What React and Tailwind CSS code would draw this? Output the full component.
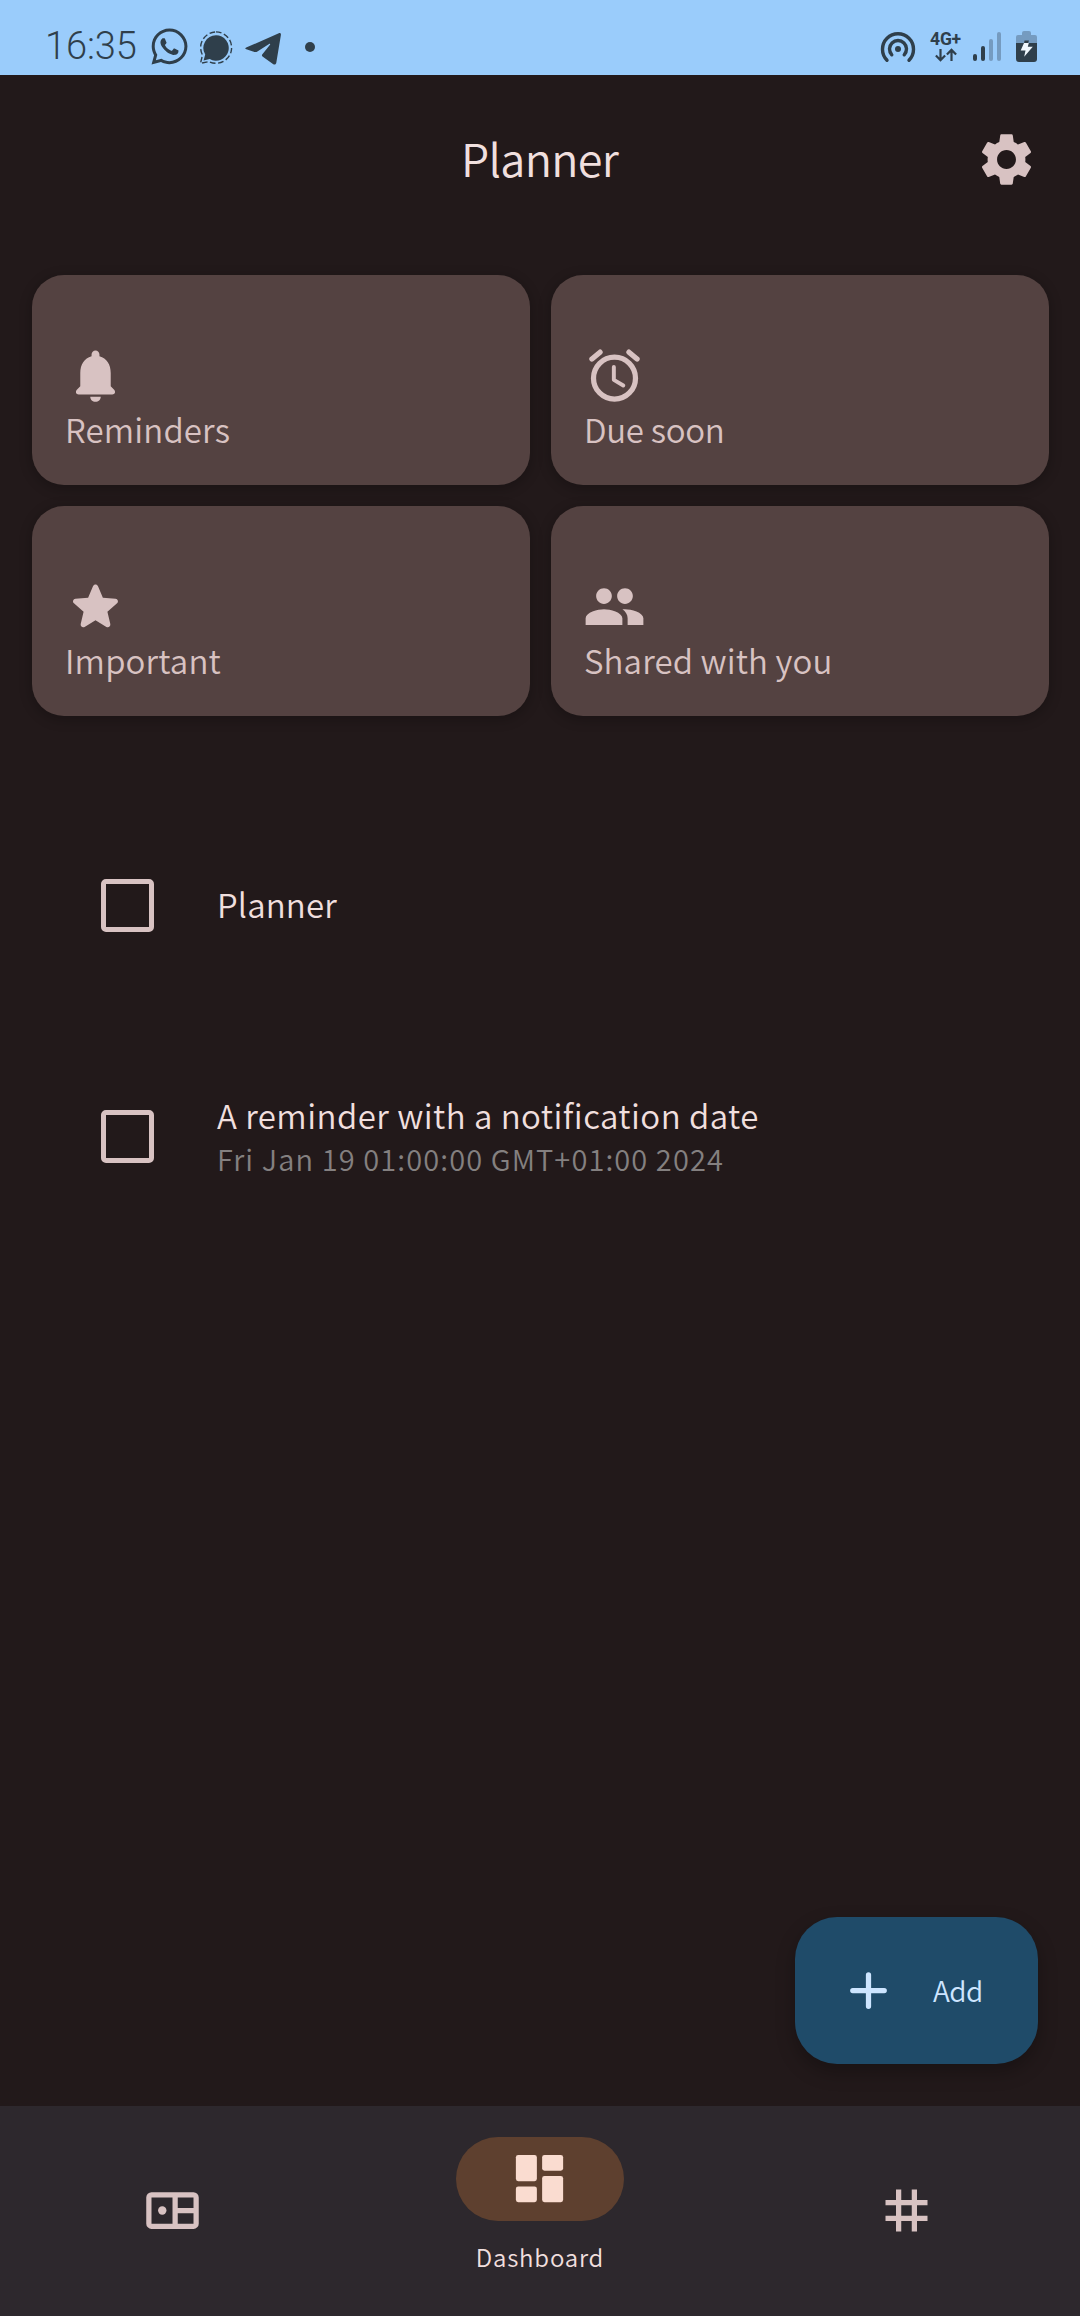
import React from "react";
import { MdSettings, MdGroup } from "react-icons/md";
import { FaWhatsapp } from "react-icons/fa";

function BellIcon() {
  return (
    <svg viewBox="0 0 24 24" className="size-[63px]" fill="currentColor">
      <path d="M12 22c1.1 0 2-.7 2-1.9h-4c0 1.2.9 1.9 2 1.9zm5.8-5.900V11c0-3.070-1.500-5.640-4.300-6.320V4c0-.83-.67-1.500-1.500-1.500s-1.500.67-1.500 1.500v.68C7.730 5.360 6.200 7.920 6.200 11v5.100l-1.300 1.300c-.7.8-.3 1.800.7 1.800h12.800c1 0 1.400-1 .7-1.800z" />
    </svg>
  );
}

function AlarmIcon() {
  return (
    <svg viewBox="0 0 24 24" className="size-[63px]" fill="none" stroke="currentColor" strokeLinecap="round" strokeLinejoin="round">
      <circle cx="12" cy="13" r="8" strokeWidth="2" />
      <path d="M3.4 5.7l3.1-2.600M20.600 5.700l-3.100-2.600" strokeWidth="2" />
      <path d="M11.750 8.750v4.900l3.600 2.150" strokeWidth="1.5" />
    </svg>
  );
}

function StarIcon() {
  return (
    <svg viewBox="0 0 24 24" className="size-[63px]" fill="currentColor">
      <path d="M12 17.27l4.15 2.51c.76.46 1.69-.22 1.49-1.08l-1.1-4.72 3.67-3.18c.67-.58.31-1.68-.57-1.75l-4.83-.41-1.89-4.46c-.34-.81-1.5-.81-1.84 0L9.19 8.63l-4.83.41c-.88.07-1.24 1.17-.57 1.75l3.67 3.18-1.1 4.72c-.2.86.73 1.54 1.49 1.08l4.15-2.5z" />
    </svg>
  );
}

function PlusIcon() {
  return (
    <svg viewBox="0 0 24 24" className="size-[63px]" fill="none" stroke="currentColor" strokeWidth="2" strokeLinecap="round">
      <path d="M12 6v12M6 12h12" />
    </svg>
  );
}

function BoardIcon() {
  return (
    <svg viewBox="0 0 24 24" className="size-[63px]" fill="none" stroke="currentColor" strokeWidth="2">
      <rect x="3" y="6" width="18" height="12" rx="1" />
      <path d="M13 6v12M13 12h8" />
      <circle cx="8.1" cy="12" r="1.6" fill="currentColor" stroke="none" />
    </svg>
  );
}

function DashboardIcon() {
  return (
    <svg viewBox="0 0 24 24" className="size-[63px]" fill="currentColor">
      <rect x="3" y="3" width="8" height="10" rx="0.9" />
      <rect x="13" y="3" width="8" height="6" rx="0.9" />
      <rect x="3" y="15" width="8" height="6" rx="0.9" />
      <rect x="13" y="11" width="8" height="10" rx="0.9" />
    </svg>
  );
}

function TagIcon() {
  return (
    <svg viewBox="0 0 24 24" className="size-[63px]" fill="none" stroke="currentColor" strokeWidth="2">
      <path d="M9 4v16M15 4v16M4 9h16M4 15h16" />
    </svg>
  );
}

function StatusBar() {
  return (
    <div className="flex h-[75px] items-start justify-between bg-[#9accfb] text-[#2f3f4b]">
      <div className="flex items-start pl-[45px]">
        <span className="mt-[23px] w-[106px] text-[38px] leading-[46px] font-light tracking-[-0.1px] font-['Roboto',sans-serif]">16:35</span>
        <FaWhatsapp className="mt-[26px] ml-[-2.500px] size-[41px]" />
        <svg viewBox="0 0 34 34" className="mt-[31px] ml-[9px] size-[34px]">
          <path d="M17 4.300a12.700 12.700 0 1 1-6.300 23.700L4.600 29.400l1.600-5.900A12.700 12.700 0 0 1 17 4.300z" fill="currentColor" />
          <path d="M17 .9a15.700 15.700 0 1 1-7.200 29.700L1.500 32.400l2-8.400A15.700 15.700 0 0 1 17 .9z" fill="none" stroke="currentColor" strokeWidth="1.4" strokeDasharray="5.600 2.600" />
        </svg>
        <svg viewBox="0 0 36 32" className="mt-[33px] ml-[12px] h-[32px] w-[36px]" fill="currentColor">
          <path d="M1.2 14.6L33.8.3c1.5-.6 2.3.3 2.1 1.7L31.3 29.8c-.4 1.7-1.5 2.3-3 1.4L17.5 23.4c-.8-.7-.8-1.4-.1-2.2l7.6-9.5c.5-.9-.1-1.2-.9-.8L12.4 18.5c-1 .7-1.8.7-2.9.4L1.3 16.3c-1.3-.4-1.3-1.1-.1-1.7z" />
        </svg>
        <span className="mt-[42px] ml-[24px] size-[10px] rounded-full bg-[#2f3f4b]" />
      </div>
      <div className="flex items-start pr-[43px]">
        <svg viewBox="0 0 36 32" className="mt-[31px] h-[32px] w-[36px]" fill="none" stroke="currentColor" strokeWidth="3.4" strokeLinecap="round">
          <path d="M7 29.2a15.5 15.5 0 1 1 22 0M11.8 23.8a8.5 8.5 0 1 1 12.4 0" />
          <circle cx="18" cy="18" r="3" fill="currentColor" stroke="none" />
        </svg>
        <div className="mt-[31px] ml-[13px] flex w-[33px] flex-col items-center">
          <span className="text-[17.500px] leading-[17px] font-bold tracking-[-0.2px] font-['Roboto',sans-serif]">4G+</span>
          <svg viewBox="0 0 22 14" className="h-[14px] w-[22px]" fill="none" stroke="currentColor" strokeWidth="2.2">
            <path d="M5.5 1v11M.9 7.5l4.6 4.7 4.6-4.7M16.5 13V2M11.9 6.6l4.6-4.7 4.6 4.7" />
          </svg>
        </div>
        <div className="mt-[32px] ml-[11px] flex h-[29px] items-end gap-[4px]">
          <span className="h-[7px] w-[4px] rounded-full bg-[#2f3f4b]" />
          <span className="h-[15px] w-[4px] rounded-full bg-[#2f3f4b]" />
          <span className="h-[22px] w-[4px] rounded-full bg-[#759bc0]" />
          <span className="h-[29px] w-[4px] rounded-full bg-[#759bc0]" />
        </div>
        <svg viewBox="0 0 21 31" className="mt-[31px] ml-[15px] h-[31px] w-[21px]">
          <path d="M6 2q0-2 2-2h5q2 0 2 2v2h4q2 0 2 2v6H0V6q0-2 2-2h4z" fill="#759bc0" />
          <path d="M0 12h21v16q0 3-3 3H3q-3 0-3-3z" fill="#2f3f4b" />
          <path d="M8.5 9.500h4.500l-1 3H8z" fill="#2f3f4b" />
          <path d="M8 12h4.800l-1 3.800h5L8.200 25.700l1.300-6.200H4.700z" fill="#f0f7fd" />
        </svg>
      </div>
    </div>
  );
}

function Card({ icon, label, labelClass }) {
  return (
    <div className="flex h-[210px] flex-col justify-end rounded-[32px] bg-[#544241] pb-[34px] pl-[32px] text-[#d8c2c2] shadow-[0_3px_12px_2px_rgba(0,0,0,0.2)]">
      {icon}
      <span className={`mt-px pl-px text-[33px] leading-[43px] ${labelClass}`}>{label}</span>
    </div>
  );
}

function Task({ title, titleClass, date }) {
  return (
    <div className="flex h-[231px] items-center gap-[63px] pl-[101px]">
      <div className="size-[53px] rounded-[5px] border-[5px] border-[#d8c2c2]" />
      <div className="flex flex-col">
        <span className={`text-[33px] leading-[42px] text-[#f0dfde] ${titleClass}`}>{title}</span>
        {date && <span className="text-[29px] leading-[44px] tracking-[1.09px] text-[#848080]">{date}</span>}
      </div>
    </div>
  );
}

export default function App() {
  return (
    <div className="flex h-[2316px] w-[1080px] flex-col bg-[#22191a] font-[350] whitespace-nowrap font-['Noto_Sans_CJK_SC',sans-serif]">
      <StatusBar />
      <header className="flex h-[169px] items-center justify-between px-[42px]">
        <div className="w-[63px]" />
        <h1 className="pr-[1px] pb-[3px] text-[45px] leading-[60px] tracking-[-0.7px] text-[#f0dfde]">Planner</h1>
        <MdSettings className="size-[63px] text-[#d8c2c2]" />
      </header>
      <section className="grid grid-cols-2 gap-[21px] pt-[31px] pr-[31px] pl-[32px]">
        <Card icon={<BellIcon />} label="Reminders" labelClass="tracking-[0.15px]" />
        <Card icon={<AlarmIcon />} label="Due soon" labelClass="tracking-[-0.3px]" />
        <Card icon={<StarIcon />} label="Important" labelClass="tracking-[0.15px]" />
        <Card icon={<MdGroup className="size-[63px]" />} label="Shared with you" labelClass="tracking-[0.12px]" />
      </section>
      <section className="mt-[74px]">
        <Task title="Planner" titleClass="pb-[4px] tracking-[0.15px]" />
        <Task title="A reminder with a notification date" titleClass="tracking-[0.47px]" date="Fri Jan 19 01:00:00 GMT+01:00 2024" />
      </section>
      <button className="mt-auto mr-[42px] mb-[42px] flex h-[147px] w-[243px] items-center gap-[32px] self-end rounded-[42px] bg-[#1f4b69] pl-[42px] text-[#cde5ff] shadow-[0_8px_18px_1px_rgba(0,0,0,0.25)]">
        <PlusIcon />
        <span className="pb-[1px] pl-px text-[28px] leading-[40px] tracking-[-0.5px]">Add</span>
      </button>
      <nav className="grid h-[210px] grid-cols-3 gap-[21px] bg-[#2d282d] text-[#d8c2c2]">
        <div className="flex items-center justify-center pr-[1px] pb-[1px]">
          <BoardIcon />
        </div>
        <div className="flex flex-col items-center pt-[31px]">
          <div className="flex h-[84px] w-[168px] items-center justify-center rounded-full bg-[#5e402f] pr-[1px] pb-[1px] text-[#fadcd0]">
            <DashboardIcon />
          </div>
          <span className="mt-[19px] text-[24px] leading-[34px] tracking-[0.8px] text-[#f0dfde]">Dashboard</span>
        </div>
        <div className="flex items-center justify-center pr-[2px] pb-[1px]">
          <TagIcon />
        </div>
      </nav>
    </div>
  );
}
